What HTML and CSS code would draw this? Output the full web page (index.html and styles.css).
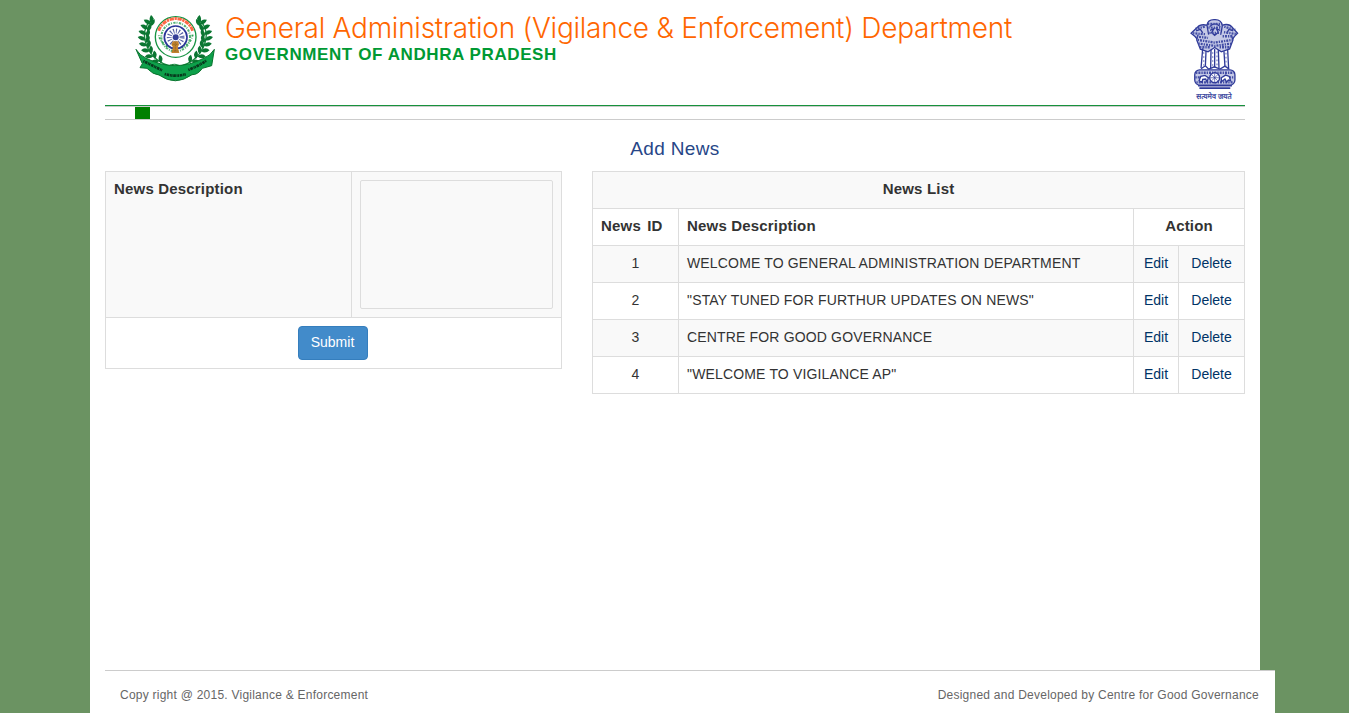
FILE: index.html
```html
<!DOCTYPE html>
<html lang="en">
<head>
<meta charset="utf-8">
<title>Add News</title>
<link rel="stylesheet" href="styles.css">
</head>
<body>
<div class="page">
  <header class="header">
    <svg class="seal" viewBox="30 25 240 207" aria-hidden="true">
      <defs>
        <path id="leaf" d="M-2 2Q-8-12 6-22Q15-8 0 2Z"/>
        <g id="branch">
          <path d="M85 40Q42 75 68 130Q88 170 134 184" fill="none" stroke="#15883c" stroke-width="4"/>
          <g fill="#0b7632">
            <use href="#leaf" transform="translate(80 54) rotate(-20)"/>
            <use href="#leaf" transform="translate(76 57) rotate(-75)"/>
            <use href="#leaf" transform="translate(77 63) rotate(15)"/>
            <use href="#leaf" transform="translate(67 71) rotate(-80)"/>
            <use href="#leaf" transform="translate(69 78) rotate(5)"/>
            <use href="#leaf" transform="translate(62 87) rotate(-85)"/>
            <use href="#leaf" transform="translate(66 95) rotate(0)"/>
            <use href="#leaf" transform="translate(60 104) rotate(-88)"/>
            <use href="#leaf" transform="translate(66 112) rotate(-5)"/>
            <use href="#leaf" transform="translate(64 121) rotate(-95)"/>
            <use href="#leaf" transform="translate(70 128) rotate(-8)"/>
            <use href="#leaf" transform="translate(71 138) rotate(-102)"/>
            <use href="#leaf" transform="translate(78 145) rotate(-16)"/>
            <use href="#leaf" transform="translate(82 154) rotate(-110)"/>
            <use href="#leaf" transform="translate(90 160) rotate(-22)"/>
            <use href="#leaf" transform="translate(99 169) rotate(-115)"/>
            <use href="#leaf" transform="translate(108 173) rotate(-25)"/>
          </g>
        </g>
      </defs>
      <use href="#branch"/>
      <use href="#branch" transform="translate(302 0) scale(-1 1)"/>
      <circle cx="152" cy="97" r="61" fill="#fff" stroke="#169342" stroke-width="4"/>
      <path d="M101 78A54 54 0 0 1 203 78" fill="none" stroke="#ff6846" stroke-width="9" stroke-dasharray="13 2 7 2"/>
      <path d="M203 90A52 52 0 0 1 101 90" fill="none" stroke="#30a557" stroke-width="6" stroke-dasharray="6 4 2 4"/>
      <circle cx="152" cy="97" r="43" fill="none" stroke="#56b476" stroke-width="6" stroke-dasharray="3 4 7 3"/>
      <circle cx="152" cy="98" r="34" fill="#fff" stroke="#2b3698" stroke-width="5"/>
      <circle cx="152" cy="98" r="19" fill="none" stroke="#5360a5" stroke-width="15" stroke-dasharray="3 5"/>
      <circle cx="152" cy="98" r="9" fill="#353f98"/>
      <path d="M143 110h17l2 10-4 8 5 17h-24l5-17-5-8z" fill="#c4832d"/>
      <path d="M143 119h16M142 139h17M151 111v31" stroke="#8f6728" stroke-width="3" stroke-dasharray="3 2"/>
      <path d="M129 184Q150 172 170 187" fill="none" stroke="#16853a" stroke-width="3"/>
      <path d="M33 134Q45 153 62 160Q150 206 238 160Q256 153 268 134L260 183L232 191Q218 211 201 210Q151 246 102 211Q84 210 66 191L45 189L52 177Z" fill="#0da04a" stroke="#08732d" stroke-width="3"/>
      <path d="M55 169Q79 181 111 197M190 196Q220 184 244 168M119 208Q151 218 184 208" fill="none" stroke="#07371c" stroke-width="8" stroke-dasharray="4 2 8 2 3 1"/>
    </svg>
    <div class="titles">
      <h1 class="department">General Administration (Vigilance &amp; Enforcement) Department</h1>
      <h2 class="government">GOVERNMENT OF ANDHRA PRADESH</h2>
    </div>
    <svg class="emblem" viewBox="45 25 147 250" aria-hidden="true">
      <g fill="none" stroke="#303b99" stroke-width="4">
        <path fill="#c5c9e6" d="M96 47Q98 29 119 30Q139 29 142 48L137 78L119 89L101 77ZM97 47Q76 42 67 53L48 71L60 81L70 93L99 87M141 47Q162 40 173 54L188 71L178 81L170 94L140 86"/>
        <path fill="#c5c9e6" d="M69 75L65 91L76 119L99 127L119 114L139 127L164 118L174 91L169 76"/>
        <path d="M83 116L78 176M93 124L91 169M108 121L107 176M119 118V174M130 121L132 176M147 125L150 170M158 118L161 176"/>
        <path d="M104 51Q119 34 136 51M105 62L117 57L110 69L119 77L130 68L124 57L136 62M63 64L76 59L83 70M175 64L162 59L156 70"/>
        <path d="M78 178L91 169 101 179 118 172 135 179 150 170 163 179"/>
        <rect x="59" y="181" width="121" height="46" rx="15" fill="#c5c9e6"/>
        <path d="M69 229H171M73 236H166" stroke-width="5"/>
      </g>
      <g fill="none" stroke="#424da5" stroke-width="7" stroke-dasharray="4 3 6 3">
        <path d="M99 43H139M100 54H139M103 70H136M61 58L92 50M54 71L92 74M65 81L99 85M148 51L181 61M147 68L184 73M143 80H174"/>
        <path d="M68 91L119 99L171 91M70 102L119 109L170 102M75 113H104M134 113H164"/>
        <path d="M63 190H176M61 204H84M155 204H178M64 219H176"/>
      </g>
      <g fill="none" stroke="#8189c4" stroke-width="4" stroke-dasharray="5 7">
        <path d="M86 128V168M113 128V170M126 126V170M153 130V168"/>
      </g>
      <g fill="#fff" stroke="#303b99" stroke-width="4">
        <circle cx="119" cy="205" r="15"/>
        <path d="M119 192v26M106 205h26M110 196l18 18M128 196l-18 18" stroke-width="2"/>
        <path d="M72 214l5-13 13-3 10 7-4 13-4-9-9 1-2 9zM139 217v-12l13-8 11 4 4 13-7-2-5 6-5-9z"/>
      </g>
      <text class="motto" x="117" y="269" text-anchor="middle">सत्यमेव जयते</text>
    </svg>
  </header>
  <div class="menu"><span class="menu-marker"></span></div>
  <h3 class="page-title">Add News</h3>
  <main class="content">
    <form class="news-form">
      <div class="field">
        <label class="field-label" for="news">News Description</label>
        <div class="field-value"><textarea id="news" class="news-input"></textarea></div>
      </div>
      <div class="actions"><button class="submit" type="button">Submit</button></div>
    </form>
    <table class="news-table">
      <colgroup><col class="col-id"><col class="col-text"><col class="col-edit"><col class="col-delete"></colgroup>
      <tbody>
        <tr><th colspan="4" class="center">News List</th></tr>
        <tr><th class="id-heading">News ID</th><th>News Description</th><th colspan="2" class="center">Action</th></tr>
        <tr><td class="center">1</td><td class="description">WELCOME TO GENERAL ADMINISTRATION DEPARTMENT</td><td class="center"><a>Edit</a></td><td class="center"><a>Delete</a></td></tr>
        <tr><td class="center">2</td><td class="description">"STAY TUNED FOR FURTHUR UPDATES ON NEWS"</td><td class="center"><a>Edit</a></td><td class="center"><a>Delete</a></td></tr>
        <tr><td class="center">3</td><td class="description">CENTRE FOR GOOD GOVERNANCE</td><td class="center"><a>Edit</a></td><td class="center"><a>Delete</a></td></tr>
        <tr><td class="center">4</td><td class="description">"WELCOME TO VIGILANCE AP"</td><td class="center"><a>Edit</a></td><td class="center"><a>Delete</a></td></tr>
      </tbody>
    </table>
  </main>
  <footer class="footer">
    <span class="copyright">Copy right @ 2015. Vigilance &amp; Enforcement</span>
    <span class="credit">Designed and Developed by Centre for Good Governance</span>
  </footer>
</div>
</body>
</html>
```
FILE: styles.css
```css
* { box-sizing: border-box; }
body {
  margin: 0;
  height: 713px;
  overflow: hidden;
  background: #6b9362;
  color: #333;
  font: 14px/20px "Liberation Sans", Arial, sans-serif;
}
h1, h2, h3 { margin: 0; }
.page {
  display: flex;
  flex-direction: column;
  width: 1170px;
  height: 713px;
  margin-left: 90px;
  padding-left: 15px;
  background: #fff;
}
.header {
  display: flex;
  align-items: flex-start;
  width: 1140px;
  height: 106px;
  padding-left: 30px;
  border-bottom: 1px solid #16923c;
}
.seal { width: 80px; height: 69px; margin-top: 13px; }
.titles { flex: 1; padding: 12px 0 0 10px; white-space: nowrap; }
.department {
  color: #ff6600;
  font: 300 28px/33px Inter, Roboto, sans-serif;
  letter-spacing: -.25px;
}
.government {
  color: #009933;
  font: bold 17px/19px "Liberation Sans", Arial, sans-serif;
  letter-spacing: .6px;
}
.emblem { width: 49px; height: 83px; margin: 18px 6px 0 0; }
.motto { font: 22px "Noto Sans", sans-serif; fill: #303b99; stroke: #303b99; stroke-width: .7; }
.menu {
  width: 1140px;
  height: 14px;
  padding-left: 30px;
  border-top: 1px solid #ccc;
  border-bottom: 1px solid #ccc;
}
.menu-marker { display: block; width: 15px; height: 12px; background: #008000; }
.page-title {
  width: 1140px;
  height: 51px;
  padding-top: 18px;
  color: #274687;
  font-size: 19px;
  font-weight: 400;
  line-height: 22px;
  letter-spacing: .35px;
  text-align: center;
}
.content { display: flex; flex: 1; gap: 30px; align-items: flex-start; width: 1140px; }
.news-form { width: 457px; height: 198px; border: 1px solid #ddd; }
.field { display: flex; height: 146px; background: #f9f9f9; border-bottom: 1px solid #ddd; }
.field-label { width: 246px; padding: 7px 8px; font-size: 15px; font-weight: bold; letter-spacing: .18px; border-right: 1px solid #ddd; }
.field-value { padding: 8px; }
.news-input { display: block; width: 193px; height: 129px; border: 1px solid #ddd; border-radius: 2px; background: transparent; resize: none; }
.actions { display: flex; justify-content: center; padding: 8px 2px 0 0; }
.submit { width: 70px; height: 34px; padding: 0 0 2px; border: 1px solid #357ebd; border-radius: 4px; background: #428bca; color: #fff; font: 14px/20px "Liberation Sans", Arial, sans-serif; }
.news-table { width: 653px; table-layout: fixed; border-collapse: collapse; }
.news-table tr:nth-child(odd) { background: #f9f9f9; }
.news-table th, .news-table td { height: 37px; padding: 7px 8px 9px; border: 1px solid #ddd; text-align: left; white-space: nowrap; }
.news-table th { font-size: 15px; letter-spacing: .18px; }
.news-table .id-heading { word-spacing: 2px; }
.news-table .description { letter-spacing: .16px; }
.news-table .center { text-align: center; }
.news-table a { color: #003366; }
.col-id { width: 86px; }
.col-text { width: 455px; }
.col-edit { width: 45px; }
.col-delete { width: 66px; }
.footer {
  display: flex;
  justify-content: space-between;
  width: 1170px;
  height: 43px;
  padding: 14px 16px 0 15px;
  border-top: 1px solid #ccc;
  background: #fff;
  color: #666;
  font-size: 12px;
  letter-spacing: .24px;
}
```
